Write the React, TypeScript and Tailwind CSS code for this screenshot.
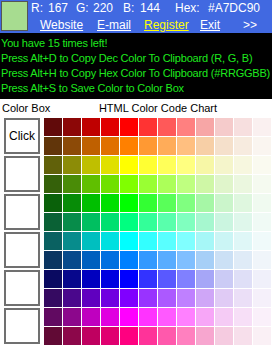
import React from "react";

const HUES = [0, 30, 60, 90, 120, 150, 180, 210, 240, 270, 300, 330];

// [saturation, value] for each column, dark shades -> pure -> tints
const SHADES: [number, number][] = [
  [0.9, 0.38],
  [0.95, 0.55],
  [1, 0.75],
  [1, 0.88],
  [1, 1],
  [0.8, 1],
  [0.65, 1],
  [0.5, 1],
  [0.33, 0.97],
  [0.17, 0.96],
  [0.1, 0.97],
  [0.04, 0.98],
];

function hsv(h: number, s: number, v: number) {
  const f = (n: number) => {
    const k = (n + h / 60) % 6;
    return Math.round(255 * (v - v * s * Math.max(0, Math.min(k, 4 - k, 1))));
  };
  return `rgb(${f(5)}, ${f(3)}, ${f(1)})`;
}

const FONT = { fontFamily: '"Liberation Sans", Arial, sans-serif' };

export default function App() {
  return (
    <div className="w-[272px] h-[346px] bg-white overflow-hidden text-[11px] leading-[13px]" style={FONT}>
      {/* top bar */}
      <div className="h-[33px] bg-[#4169e1] flex text-white">
        <div className="ml-[1px] mt-[1px] w-[27px] h-[30px] border border-[#555] bg-[#A7DC90]" />
        <div className="flex flex-col whitespace-nowrap">
          <div className="flex pt-[1px] pl-[3px] text-[12px] leading-[14px]">
            <span className="w-[17px]">R:</span>
            <span className="w-[28px]">167</span>
            <span className="w-[17px]">G:</span>
            <span className="w-[30px]">220</span>
            <span className="w-[17px]">B:</span>
            <span className="w-[35px]">144</span>
            <span className="w-[33px]">Hex:</span>
            <span>#A7DC90</span>
          </div>
          <div className="flex pt-[3px] pl-[12px] text-[12px] leading-[14px]">
            <span className="w-[57px]"><span className="underline">Website</span></span>
            <span className="w-[47px]"><span className="underline">E-mail</span></span>
            <span className="w-[56px]"><span className="underline text-[#ffff00]">Register</span></span>
            <span className="w-[43px]"><span className="underline">Exit</span></span>
            <span>&gt;&gt;</span>
          </div>
        </div>
      </div>

      {/* hint lines */}
      <div className="h-[66px] bg-black text-[#1ee81e] pl-[1px] pt-[3px] leading-[15px] text-[11px] tracking-[-0.2px] whitespace-nowrap">
        <div>You have 15 times left!</div>
        <div>Press Alt+D to Copy Dec Color To Clipboard (R, G, B)</div>
        <div>Press Alt+H to Copy Hex Color To Clipboard (#RRGGBB)</div>
        <div>Press Alt+S to Save Color to Color Box</div>
      </div>

      {/* labels */}
      <div className="h-[19px] flex items-center text-black text-[11px] whitespace-nowrap">
        <div className="w-[44px] pl-[2px]">Color Box</div>
        <div className="flex-1 text-center">HTML Color Code Chart</div>
      </div>

      {/* boxes + chart */}
      <div className="flex">
        <div className="w-[44px] pl-[4px] flex flex-col gap-[2px]">
          {Array.from({ length: 6 }).map((_, i) => (
            <div
              key={i}
              className="w-[36px] h-[36px] border-2 border-[#707070] bg-white flex items-center justify-center text-black text-[12px]"
            >
              {i === 0 ? "Click" : null}
            </div>
          ))}
        </div>
        <div className="grid grid-cols-[repeat(12,18px)] auto-rows-[18px] gap-[1px]">
          {HUES.map((h) =>
            SHADES.map(([s, v], j) => (
              <div key={`${h}-${j}`} style={{ backgroundColor: hsv(h, s, v) }} />
            ))
          )}
        </div>
      </div>
    </div>
  );
}
